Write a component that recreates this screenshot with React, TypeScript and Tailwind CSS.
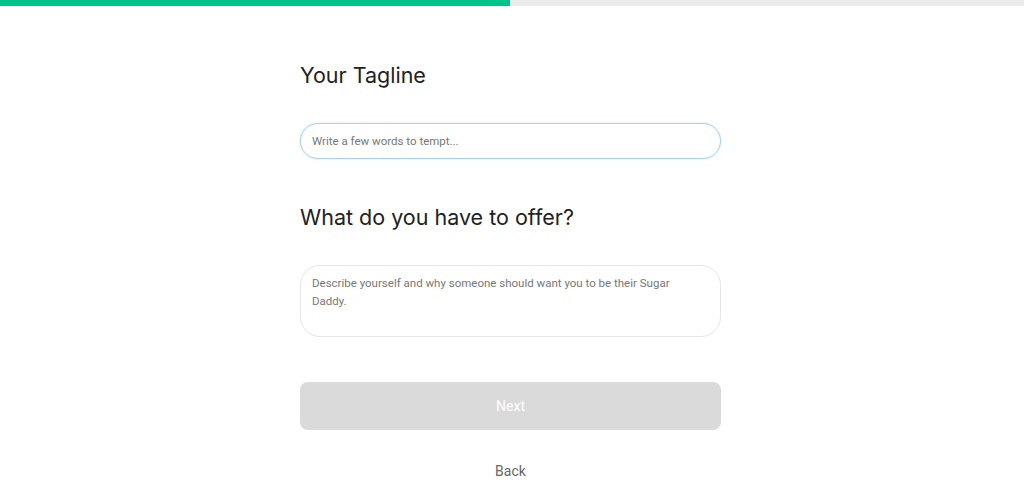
export default function App() {
  return (
    <div className="min-h-[499px] w-full bg-white font-['Roboto',sans-serif]">
      <div className="flex h-[6px] w-full bg-[#ececec]">
        <div className="h-full w-[510px] bg-[#00c389]" />
      </div>

      <div className="flex justify-center pr-[3px]">
        <div className="flex w-[421px] flex-col pt-[55px]">
          <h1 className="font-['Inter',sans-serif] text-[21.5px] leading-[28px] font-normal text-[#222]">
            Your Tagline
          </h1>

          <input
            className="mt-[34px] h-[36px] w-full rounded-full border border-[#a6d2ea] px-[11px] text-[11.5px] text-[#333] shadow-[0_0_2px_rgba(120,190,230,0.5)] outline-none placeholder:text-[#777]"
            placeholder="Write a few words to tempt..."
          />

          <h2 className="mt-[43px] font-['Inter',sans-serif] text-[21.5px] leading-[30px] font-normal text-[#222]">
            What do you have to offer?
          </h2>

          <textarea
            className="mt-[33px] h-[72px] w-full resize-none rounded-[20px] border border-[#e6e6e6] pl-[11px] pr-[50px] pt-[8px] text-[11.5px] leading-[18px] text-[#333] outline-none placeholder:text-[#777]"
            placeholder="Describe yourself and why someone should want you to be their Sugar Daddy."
          />

          <button className="mt-[45px] h-[48px] w-full rounded-[8px] bg-[#dadada] text-[14px] text-white">
            Next
          </button>

          <button className="mt-[31px] self-center text-[14px] text-[#666]">
            Back
          </button>
        </div>
      </div>
    </div>
  );
}
